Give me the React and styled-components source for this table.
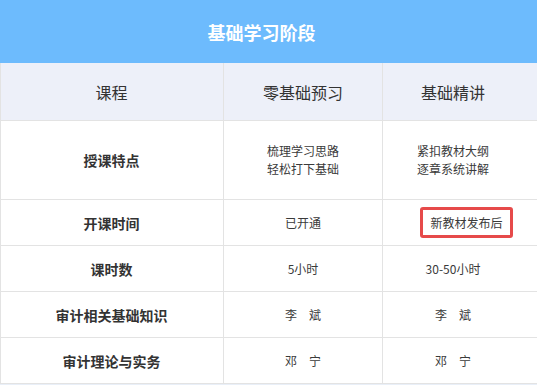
import React from 'react'
import styled, { createGlobalStyle } from 'styled-components'

const GlobalStyle = createGlobalStyle`
    html, body {
        margin: 0;
        padding: 0;
        background: #e9eff8;
    }
    body {
        font-family: "Noto Sans CJK SC", "Noto Sans", sans-serif;
        color: #333;
    }
`

const Wrapper = styled.div`
    width: 537px;
    background: #fff;
    overflow: hidden;
`

const Title = styled.div`
    height: 63px;
    background: #6dbbfd;
    color: #fff;
    font-size: 18px;
    font-weight: bold;
    display: flex;
    align-items: center;
    justify-content: center;
    padding-right: 14px;
`

const Row = styled.div`
    display: grid;
    grid-template-columns: 222px 159px 1fr;
    height: ${props => props.h}px;
    border-bottom: 1px solid #e3e3e3;
    border-left: 1px solid #e3e3e3;
    background: ${props => props.head ? '#edf0f9' : '#fff'};
    box-sizing: border-box;
`

const Cell = styled.div`
    display: flex;
    flex-direction: column;
    align-items: center;
    justify-content: center;
    text-align: center;
    font-size: ${props => props.head ? '16px' : props.label ? '14px' : '12px'};
    font-weight: ${props => props.label ? 'bold' : 'normal'};
    line-height: 18px;
    color: ${props => props.head || props.label ? '#333' : '#3a3a3a'};
    border-left: ${props => props.first ? 'none' : '1px solid #e3e3e3'};
    padding-right: ${props => props.last ? '14px' : '0'};
    margin-left: ${props => props.first ? '-1px' : '0'};

    & p {
        margin: 0;
    }
`

const Marked = styled.span`
    display: inline-flex;
    align-items: center;
    height: 31px;
    box-sizing: border-box;
    padding: 0 7px;
    border: 3px solid #e64a4a;
    border-radius: 3px;
    margin-left: 27px;
`

const rows = [
    { label: '授课特点', a: ['梳理学习思路', '轻松打下基础'], b: ['紧扣教材大纲', '逐章系统讲解'], h: 79 },
    { label: '开课时间', a: ['已开通'], b: null, h: 46 },
    { label: '课时数', a: ['5小时'], b: ['30-50小时'], h: 46 },
    { label: '审计相关基础知识', a: ['李　斌'], b: ['李　斌'], h: 46 },
    { label: '审计理论与实务', a: ['邓　宁'], b: ['邓　宁'], h: 46 },
]

export default function App() {
    return (
        <>
            <GlobalStyle />
            <Wrapper>
                <Title>基础学习阶段</Title>

                <Row head h={58}>
                    <Cell head first>课程</Cell>
                    <Cell head>零基础预习</Cell>
                    <Cell head last>基础精讲</Cell>
                </Row>

                {rows.map(r => (
                    <Row key={r.label} h={r.h}>
                        <Cell label first>{r.label}</Cell>
                        <Cell>{r.a.map(t => <p key={t}>{t}</p>)}</Cell>
                        <Cell last>
                            {r.b
                                ? r.b.map(t => <p key={t}>{t}</p>)
                                : <Marked>新教材发布后</Marked>}
                        </Cell>
                    </Row>
                ))}
            </Wrapper>
        </>
    )
}
